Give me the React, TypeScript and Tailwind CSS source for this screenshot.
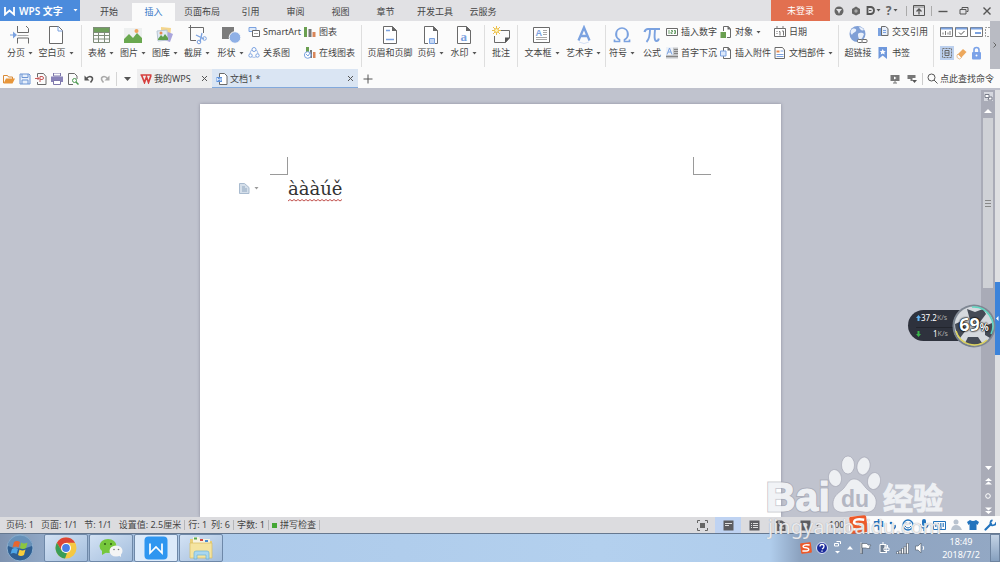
import type { ReactNode } from 'react'
import clsx from 'clsx'

type IconProps = { w?: number; h?: number; className?: string; children: ReactNode }

const Icon = ({ w = 20, h = 20, className, children }: IconProps) => (
    <svg width={w} height={h} viewBox={`0 0 ${w} ${h}`} fill="none" className={clsx('shrink-0', className)} aria-hidden="true">
        {children}
    </svg>
)

const Caret = ({ className = 'text-[#555]' }: { className?: string }) => (
    <Icon w={5} h={3} className={className}><path d="M0.5 0h4L2.5 2.5z" fill="currentColor" /></Icon>
)

const Sep = ({ className }: { className?: string }) => <div className={clsx('w-px shrink-0', className)} />

const G = '#6a6a6a'
const B = '#7ba2e0'

/* ---------- ribbon icons ---------- */

const PageBreak = () => (
    <Icon>
        <path d="M7.500 1v6.500h11V3.500L16 1M7.500 18.500v-5.500h11v5.500" stroke={G} />
        <path d="M7.500 10.500h11" stroke="#aaa" />
        <path d="M0 10h3" stroke={B} />
        <path d="M3 6.500v7l4-3.500z" fill={B} />
    </Icon>
)
const BlankPage = () => (
    <Icon>
        <path d="M3.500 1.500h9l4 4v13h-13z" stroke={G} fill="#fff" />
        <path d="M12 1.500v4.500h4.500" stroke={B} />
    </Icon>
)
const TableIcon = () => (
    <Icon>
        <path d="M2 2h17v5H2z" fill="#6f9f5c" />
        <path d="M2.500 2.500h16v15h-16zM2.500 7.500h16M2.500 10.500h16M2.500 14h16M7.500 7v10.500M13.500 7v10.500" stroke="#7f8c7a" />
    </Icon>
)
const PictureIcon = () => (
    <Icon>
        <path d="M1 3h18v15H1z" fill="#eef0f0" />
        <path d="M1 14l5-5 4 4 4-5 5 5v5H1z" fill="#6aa84f" />
        <circle cx="13.500" cy="6" r="2" fill="#f0a35c" />
    </Icon>
)
const GalleryIcon = () => (
    <Icon>
        <path d="M6 2l10 1-1 10-9-1z" fill="#f4d58c" />
        <path d="M13 7l5 2-3 8-6-2z" fill="#a9a5dc" />
        <path d="M2 6l10-1 1 10-10 1z" fill="#dfeaf5" stroke="#b9c6d3" />
        <path d="M3 14l3-4 2 2 2-3 3 4v2H3z" fill="#5f9f4b" />
        <circle cx="6" cy="8" r="1.500" fill="#e58a4f" />
    </Icon>
)
const ScreenshotIcon = () => (
    <Icon>
        <path d="M16.500 8V2.500h-13v13H9" stroke={G} />
        <path d="M1.500 2.500h2M3.500 0v3" stroke={G} />
        <path d="M9 10l8 4M15 8l-2 9" stroke={B} strokeWidth="1.300" />
        <circle cx="12" cy="17" r="1.800" stroke={B} /><circle cx="17.500" cy="13.500" r="1.800" stroke={B} />
    </Icon>
)
const ShapesIcon = () => (
    <Icon>
        <path d="M1 2h12v12H1z" fill="#7c7c7c" />
        <circle cx="14" cy="12.500" r="5.800" fill="#8fb0e6" stroke="#fbfbfb" />
    </Icon>
)
const HeaderFooterIcon = () => (
    <Icon>
        <path d="M3.500 1.500h9l4 4v13h-13z" stroke={G} fill="#fff" />
        <path d="M12 1v5h5z" fill="#666" />
        <path d="M6 5.500h4M6 14.500h8" stroke={B} strokeWidth="1.500" />
    </Icon>
)
const PageNumIcon = () => (
    <Icon>
        <path d="M7 18.500H3.500v-17h9l4 4v13H14" stroke={G} fill="#fff" />
        <path d="M12 1v5h5z" fill="#666" />
        <path d="M8.500 13.500h5v5h-5z" stroke={B} fill="#c6d8f3" />
    </Icon>
)
const WatermarkIcon = () => (
    <Icon>
        <path d="M3.500 1.500h9l4 4v13h-13z" stroke={G} fill="#fff" />
        <path d="M12 1v5h5z" fill="#666" />
        <text x="6.500" y="15.500" fontSize="13" fontWeight="700" fill={B} fontFamily="Liberation Serif">a</text>
    </Icon>
)
const CommentIcon = () => (
    <Icon>
        <path d="M9 5.500h9.500V13l-4 4.500h-11V11" stroke={G} />
        <path d="M19 12.500h-5V18z" fill="#555" />
        <path d="M5.500 1v9M1 5.500h9M2 2l7 7M9 2L2 9" stroke="#ecc04b" />
        <circle cx="5.500" cy="5.500" r="2" fill="#fff3b8" stroke="#ecc04b" />
    </Icon>
)
const TextBoxIcon = () => (
    <Icon>
        <path d="M1.500 2.500h16v15h-16z" stroke={G} fill="#fff" />
        <text x="3.500" y="10.500" fontSize="9" fontWeight="700" fill={B} fontFamily="Liberation Sans">A</text>
        <path d="M11 5.500h4M11 7.500h4M11 9.500h4M4 12.500h11M4 14.500h11" stroke="#a8a8a8" />
    </Icon>
)
const WordArtIcon = () => (
    <Icon>
        <path d="M4.500 15.500L10 2.500l5.500 13M6.500 11h7" stroke={B} strokeWidth="2.300" />
        <path d="M5 17q5 3 10 0" stroke="#d5e1f5" />
    </Icon>
)
const OmegaIcon = () => (
    <Icon>
        <path d="M2.500 14.500v2h5v-1.700C5 13.300 4 11.300 4 9a6 6 0 0 1 12 0c0 2.300-1 4.300-3.500 5.800v1.700h5v-2" stroke={B} strokeWidth="1.700" />
        <path d="M4.500 6.500v5M15.500 6.500v5" stroke={B} strokeWidth="1.500" />
    </Icon>
)
const PiIcon = () => (
    <Icon>
        <path d="M2.500 7c.8-2.500 2-3 3.500-3h12" stroke={B} strokeWidth="2.200" />
        <path d="M8 4.500c0 5-.5 9.500-3.500 12.500M13 4.500c-.5 6-1 11.500 1.500 11.500 1.300 0 2-1 2.300-2.500" stroke={B} strokeWidth="1.900" />
    </Icon>
)
const LinkIcon = () => (
    <Icon>
        <circle cx="9.500" cy="9" r="8" fill="#7f9fd6" />
        <path d="M4 4c3-1 5 0 4 2s-3 1-4 4c-2-2-2-4 0-6zM10 9c2-2 5-1 6 0-1 3-2 5-4 6-2-2-2-4-2-6zM11 2c2 0 4 1 5 3-2 1-4 0-5-3z" fill="#e9f0fb" />
        <rect x="9.500" y="14.500" width="5" height="3" rx="1" fill="#fff" stroke={G} /><rect x="14" y="14.500" width="5" height="3" rx="1" fill="#fff" stroke={G} />
    </Icon>
)
const SmartArtIcon = () => (
    <Icon w={12} h={12}>
        <path d="M1 1.500h7v4H1z" fill="#dfeaf8" stroke={B} />
        <path d="M4.500 4.500h7v6h-7z" fill="#fff" stroke={G} /><path d="M6 7.500h4" stroke="#aaa" />
    </Icon>
)
const RelationIcon = () => (
    <Icon w={12} h={12}>
        <circle cx="6" cy="6.500" r="4" stroke="#a9c1ea" />
        <circle cx="6" cy="2.500" r="2" fill="#fff" stroke={B} /><circle cx="2.500" cy="8.500" r="1.700" fill="#fff" stroke={B} /><circle cx="9.500" cy="8.500" r="1.700" fill="#fff" stroke={B} />
    </Icon>
)
const ChartIcon = () => (
    <Icon w={12} h={12}>
        <path d="M0 1h3v10H0z" fill="#6a9f50" /><path d="M4.500 3h3v8h-3z" fill="#777" /><path d="M8.500 6h3v5h-3z" fill="#d9865a" />
    </Icon>
)
const OnlineChartIcon = () => (
    <Icon w={12} h={12}>
        <path d="M2 0h3v6H2z" fill="#6a9f50" /><path d="M6 3h2v8H6z" fill="#777" /><path d="M9 5h2.500v6H9z" fill="#d9865a" />
        <circle cx="3.700" cy="8" r="3.300" fill="#fff" stroke={B} /><path d="M2 7l2 2 2-3" stroke={B} />
    </Icon>
)
const NumberIcon = () => (
    <Icon w={12} h={12}>
        <path d="M.5 2.500h11v7H.5z" stroke={G} fill="#fff" /><path d="M3 4v4M5 4.500h1.500v1.500H5V7.500h1.500M8 4.500h1.500v3H8M8 6h1.500" stroke="#6a9f6a" />
    </Icon>
)
const DropCapIcon = () => (
    <Icon w={12} h={12}>
        <path d="M0 .5h12v11H0z" fill="#c3c5c8" /><path d="M8 2.500h4M8 4.500h4M8 6.500h4M0 9.500h12" stroke="#858585" />
        <path d="M0 0h7v8H0z" fill="#eef2f8" /><path d="M1 7.500L3.500 1 6 7.500M2 5h3" stroke={B} />
    </Icon>
)
const ObjectIcon = () => (
    <Icon w={12} h={12}><path d="M3.500 5V.5h5l2 2.500v8.500H7" stroke={G} fill="#fff" /><path d="M7.500 0v3.500H11z" fill="#666" /><path d="M.5 6H6v6H.5z" fill="#6a9f50" /></Icon>
)
const AttachIcon = () => (
    <Icon w={12} h={12}><path d="M3.500 4V.5h5l2 2.500v8.500h-7V9" stroke={G} fill="#fff" /><path d="M7.500 0v3.500H11z" fill="#666" /><path d="M.5 4H6v5H.5z" fill="#dce8fa" stroke={B} /></Icon>
)
const DateIcon = () => (
    <Icon w={12} h={12}><path d="M.5 2.500h11v8H.5z" stroke={G} fill="#fff" /><path d="M3 0v3M9 0v3M5 5.500h1v4M8 5h1.500v4.500M2.500 5.500h1M2.500 7.500h1" stroke="#777" /></Icon>
)
const PartsIcon = () => (
    <Icon w={12} h={12}><path d="M1 .5h7.500l2 2.500v8.500H1z" stroke={G} fill="#fff" /><path d="M2.500 4.500h3" stroke="#e58a4f" strokeWidth="2" /><path d="M6.500 4h3M2.500 7.500h7M2.500 9.500h7" stroke={B} /></Icon>
)
const CrossRefIcon = () => (
    <Icon w={12} h={12}><path d="M1 2h5v8H1z" fill="#7ba2e0" /><path d="M4.500.5h4l2.500 2v7H4.500z" stroke={G} fill="#e8effa" /><path d="M6 4.500h3M6 6.500h3" stroke={B} /></Icon>
)
const BookmarkIcon = () => (
    <Icon w={12} h={12}><path d="M1.500 0h8.500v12L5.700 8.500 1.500 12z" fill="#6f98dc" /><path d="M5.700 2l1 2 2 .2-1.500 1.300.5 2-2-1-2 1 .5-2L2.700 4.200l2-.2z" fill="#fff" /></Icon>
)

/* ---------- ribbon building blocks ---------- */

type BigProps = { label: string; icon: ReactNode; width: string; arrow?: boolean }

const BigButton = ({ label, icon, width, arrow }: BigProps) => (
    <button className={clsx('flex h-full shrink-0 flex-col items-center pt-1', width)}>
        {icon}
        <span className="flex h-4 items-center gap-[3px] whitespace-nowrap">{label}{arrow && <Caret />}</span>
    </button>
)

const SmallButton = ({ label, icon, arrow }: { label: string; icon: ReactNode; arrow?: boolean }) => (
    <button className="flex h-3 items-center gap-[3px] whitespace-nowrap">{icon}{label}{arrow && <Caret />}</button>
)

const Column = ({ width, children }: { width: string; children: ReactNode }) => (
    <div className={clsx('flex shrink-0 flex-col gap-[9px] pt-[5px]', width)}>{children}</div>
)

const RibbonSep = ({ className }: { className?: string }) => <Sep className={clsx('mt-1 h-[42px] bg-[#dedede]', className)} />

const menus = [
    ['开始', 'w-[46px]'], ['插入', 'w-[43px]'], ['页面布局', 'w-[54px]'], ['引用', 'w-[43px]'], ['审阅', 'w-[47px]'],
    ['视图', 'w-[43px]'], ['章节', 'w-[47px]'], ['开发工具', 'w-[52px]'], ['云服务', 'w-[44px]'],
]

const TitleBar = () => (
    <header className="flex h-[21px] shrink-0 items-stretch bg-[#e1e1e4] text-[#444]">
        <button className="flex w-20 shrink-0 items-center bg-[#4b8bdc] pl-1 text-[10px] font-semibold text-white">
            <Icon w={12} h={10}><path d="M1 1v7.500l4.500-4 4.500 4V1" stroke="#fff" strokeWidth="1.800" /></Icon>
            <span className="ml-[3px] whitespace-nowrap">WPS 文字</span>
            <Caret className="mr-[2px] ml-auto text-white" />
        </button>
        <nav className="ml-[6px] flex items-end">
            {menus.map(([name, width]) => (
                <button key={name} className={clsx('h-[18px] shrink-0', width, name === '插入' && 'bg-[#fbfbfb] text-[#3c7cc9]')}>{name}</button>
            ))}
        </nav>
        <div className="ml-auto flex items-center">
            <button className="h-full w-[59px] bg-[#e27050] text-white">未登录</button>
            <button className="flex w-[18px] justify-center" aria-label="皮肤">
                <Icon w={10} h={10}><circle cx="5" cy="5" r="4.500" fill="#666" /><path d="M2 3h6L6 5.500 5 8 4 5.500z" fill="#e1e1e4" /></Icon>
            </button>
            <button className="flex w-4 justify-center" aria-label="设置">
                <Icon w={10} h={10}><path d="M5 .5L9 3v4.500L5 9.500 1 7.500V3z" fill="#666" /><circle cx="5" cy="5" r="1.700" fill="#aaa" /></Icon>
            </button>
            <button className="flex w-[18px] items-center justify-center gap-px" aria-label="文档">
                <Icon w={9} h={9}><path d="M1.500 1h3.500q3 .5 3 3.500T5 8H1.500z" stroke="#555" strokeWidth="1.800" /><path d="M3 4.500h2.500" stroke="#555" /></Icon><Caret />
            </button>
            <button className="flex w-5 items-center justify-center gap-[2px] text-[12px] font-bold text-[#666]">?<Caret /></button>
            <Sep className="ml-1 h-[10px] bg-[#aaa]" />
            <button className="flex w-6 justify-center" aria-label="折叠功能区">
                <Icon w={12} h={11}><path d="M.5.5h11v10H.5z" stroke="#555" /><path d="M1 2h10" stroke="#888" /><path d="M6 9.500v-5M3.500 6.500L6 4l2.500 2.500" stroke="#555" strokeWidth="1.300" /></Icon>
            </button>
            <Sep className="h-[10px] bg-[#aaa]" />
            <button className="flex w-[22px] justify-center" aria-label="最小化"><Icon w={10} h={10}><path d="M.5 5.500h9" stroke="#555" strokeWidth="1.400" /></Icon></button>
            <button className="flex w-5 justify-center" aria-label="还原"><Icon w={10} h={10}><path d="M3 3V1.500h6v4H7.500M1 3.500h6v4.500H1z" stroke="#555" /></Icon></button>
            <button className="flex w-[26px] justify-center" aria-label="关闭"><Icon w={10} h={10}><path d="M1.500 1.500l7 7M8.500 1.500l-7 7" stroke="#555" strokeWidth="1.400" /></Icon></button>
        </div>
    </header>
)

const Ribbon = () => (
    <div className="flex h-12 shrink-0 items-stretch overflow-hidden bg-[#fbfbfb]">
        <BigButton label="分页" icon={<PageBreak />} width="w-10" arrow />
        <BigButton label="空白页" icon={<BlankPage />} width="w-8" arrow />
        <RibbonSep className="mr-[3px] ml-[9px]" />
        <BigButton label="表格" icon={<TableIcon />} width="w-8" arrow />
        <BigButton label="图片" icon={<PictureIcon />} width="w-8" arrow />
        <BigButton label="图库" icon={<GalleryIcon />} width="w-8" arrow />
        <BigButton label="截屏" icon={<ScreenshotIcon />} width="w-8" arrow />
        <BigButton label="形状" icon={<ShapesIcon />} width="w-[35px]" arrow />
        <Column width="w-14">
            <SmallButton label="SmartArt" icon={<SmartArtIcon />} />
            <SmallButton label="关系图" icon={<RelationIcon />} />
        </Column>
        <Column width="w-[57px]">
            <SmallButton label="图表" icon={<ChartIcon />} />
            <SmallButton label="在线图表" icon={<OnlineChartIcon />} />
        </Column>
        <RibbonSep className="mr-1" />
        <BigButton label="页眉和页脚" icon={<HeaderFooterIcon />} width="w-12" />
        <BigButton label="页码" icon={<PageNumIcon />} width="w-[33px]" arrow />
        <BigButton label="水印" icon={<WatermarkIcon />} width="w-[33px]" arrow />
        <RibbonSep className="mr-1 ml-1" />
        <BigButton label="批注" icon={<CommentIcon />} width="w-6" />
        <RibbonSep className="mr-1 ml-1" />
        <BigButton label="文本框" icon={<TextBoxIcon />} width="w-10" arrow />
        <BigButton label="艺术字" icon={<WordArtIcon />} width="w-[43px]" arrow />
        <RibbonSep />
        <BigButton label="符号" icon={<OmegaIcon />} width="w-8" arrow />
        <BigButton label="公式" icon={<PiIcon />} width="w-[28px]" />
        <Column width="w-[54px]">
            <SmallButton label="插入数字" icon={<NumberIcon />} />
            <SmallButton label="首字下沉" icon={<DropCapIcon />} />
        </Column>
        <Column width="w-[54px]">
            <SmallButton label="对象" icon={<ObjectIcon />} arrow />
            <SmallButton label="插入附件" icon={<AttachIcon />} />
        </Column>
        <Column width="w-16">
            <SmallButton label="日期" icon={<DateIcon />} />
            <SmallButton label="文档部件" icon={<PartsIcon />} arrow />
        </Column>
        <RibbonSep />
        <BigButton label="超链接" icon={<LinkIcon />} width="w-[38px]" />
        <Column width="w-14">
            <SmallButton label="交叉引用" icon={<CrossRefIcon />} />
            <SmallButton label="书签" icon={<BookmarkIcon />} />
        </Column>
        <RibbonSep className="mr-[6px]" />
        <div className="grid w-[50px] shrink-0 grid-cols-[15px_15px_15px_5px] content-start gap-y-[7px] overflow-hidden pt-1">
            <button aria-label="文本域"><Icon w={13} h={14}><path d="M.5 2.500h12v9H.5z" fill="#fff" stroke="#777" /><path d="M1 3.500h11" stroke={B} strokeWidth="2" /><path d="M3 7.500v2M5.500 6v4M8 7.500v2M10 6v4" stroke="#777" /></Icon></button>
            <button aria-label="复选框"><Icon w={13} h={14}><path d="M.5 2.500h12v9H.5z" fill="#fff" stroke="#777" /><path d="M1 3.500h11" stroke={B} strokeWidth="2" /><path d="M4 7.500l2 2 3.500-3.500" stroke="#555" /></Icon></button>
            <button aria-label="下拉域"><Icon w={13} h={14}><path d="M.5 2.500h12v9H.5z" fill="#fff" stroke="#777" /><path d="M1 3.500h11" stroke={B} strokeWidth="2" /><path d="M5 8h6" stroke={B} strokeWidth="2" /></Icon></button>
            <button aria-label="更多域"><Icon w={5} h={14}><path d="M5 2.500H.5v9H5" stroke="#999" strokeDasharray="2 1" /></Icon></button>
            <button aria-label="底纹"><Icon w={14} h={14}><path d="M0 0h14v14H0z" fill="#bcd0ee" /><path d="M2.500 2.500h9v9h-9z" stroke="#777" strokeDasharray="2 1" /><path d="M5 4.500h4v5H5zM5 7h4" stroke="#666" /></Icon></button>
            <button aria-label="清除"><Icon w={13} h={14}><path d="M2 9l6-6 3.500 3L6 12q-3 1-4-3z" fill="#eda85c" /><path d="M3 8l3.500 3.500L4.500 13Q1 12 2 9z" fill="#fff" stroke="#e0a569" strokeWidth=".7" /></Icon></button>
            <button aria-label="保护"><Icon w={13} h={14}><rect x="2" y="6" width="9" height="7.500" rx="1" fill="#7ba2e8" /><path d="M4 6V4a2.500 2.500 0 0 1 5 0v2" stroke="#7ba2e8" strokeWidth="1.600" /><circle cx="6.500" cy="9.500" r="1" fill="#fff" /></Icon></button>
        </div>
        <button className="ml-auto flex w-[10px] shrink-0 items-center justify-center bg-[#b9bbc3]" aria-label="向右滚动">
            <Icon w={4} h={6}><path d="M.5.5L3 3 .5 5.500" stroke="#666" /></Icon>
        </button>
    </div>
)

const Close = () => <Icon w={7} h={7}><path d="M1 1l5 5M6 1L1 6" stroke="#555" /></Icon>

const TabBar = () => (
    <div className="flex h-[21px] shrink-0 items-center border-b-2 border-[#bfc1cc] bg-[#fbfbfb]">
        <div className="flex w-[113px] shrink-0 items-center gap-1 pl-[3px]">
            <button aria-label="打开"><Icon w={12} h={12}><path d="M.5 10V2.500h4l1 1.500h4v2" stroke="#d98a36" /><path d="M.5 10.500L3 5.500h9L9.500 10.500z" fill="#e8963a" /></Icon></button>
            <button aria-label="保存"><Icon w={12} h={12}><path d="M1 1h9l1 1v9H1z" stroke="#6d95d4" fill="#e7effb" /><path d="M3 1v3.500h6V1M3 11V7h6v4" stroke="#6d95d4" /></Icon></button>
            <button aria-label="输出PDF"><Icon w={12} h={12}><path d="M2.500 4V.5h6l2.500 3v8H2.500V9" stroke={G} /><path d="M5 9V3.500h2q1.500 0 1.500 1.500T7 6.500H5M0 5.500h4M2.500 4L4 5.500 2.500 7" stroke="#c75a5a" /></Icon></button>
            <button aria-label="打印"><Icon w={12} h={12}><path d="M2.500 0h7v3h-7z" stroke="#7d77ab" /><path d="M0 3.500h12V9H0z" fill="#8882b8" /><path d="M2.500 7.500h7v4h-7z" fill="#fff" stroke="#7d77ab" /></Icon></button>
            <button aria-label="打印预览"><Icon w={12} h={12}><path d="M6 11.500H1.500V.5h6L10 3v3" stroke={G} /><circle cx="7.500" cy="7.500" r="2" stroke="#4d9a50" /><path d="M9 9l2.500 2.500" stroke="#4d9a50" strokeWidth="1.500" /></Icon></button>
            <button aria-label="撤销"><Icon w={12} h={12}><path d="M3 6Q6 2.500 8.500 4T7.500 9.500" stroke="#555" strokeWidth="1.600" /><path d="M1.500 2.500v5h5z" fill="#555" /></Icon></button>
            <button aria-label="恢复"><Icon w={12} h={12}><path d="M9 6Q6 2.500 3.500 4T4.500 9.500" stroke="#aaa" strokeWidth="1.600" /><path d="M10.500 2.500v5h-5z" fill="#aaa" /></Icon></button>
        </div>
        <Sep className="ml-[3px] h-[14px] bg-[#d5d5d5]" />
        <button className="flex w-5 justify-center" aria-label="自定义"><Icon w={7} h={4}><path d="M0 0h7L3.500 4z" fill="#555" /></Icon></button>
        <div className="flex h-full w-[75px] shrink-0 items-center bg-[#eeeeef] pl-[3px]">
            <Icon w={12} h={10}><path d="M.5 1h11M1.500 1l3 7.500L6.500 3l2 5.500 2.500-7" stroke="#d6403f" strokeWidth="1.700" /></Icon>
            <button className="ml-[2px] whitespace-nowrap">我的WPS</button>
            <button className="mr-1 ml-auto" aria-label="关闭我的WPS"><Close /></button>
        </div>
        <div className="flex h-full w-[146px] shrink-0 items-center bg-[#dae5f3] pl-1 shadow-[inset_0_-1px_0_#82a9dc]">
            <Icon w={12} h={12}><path d="M3.500 4V.5h5L11 3v8.500H3.500V9" stroke={G} fill="#fff" /><path d="M.5 4H6v5H.5z" fill="#5f93dd" /><path d="M1.500 5v2.500L3.200 6 5 7.500V5" stroke="#fff" strokeWidth=".8" /></Icon>
            <button className="ml-[2px] whitespace-nowrap">文档1 *</button>
            <button className="mr-1 ml-auto" aria-label="关闭文档1"><Close /></button>
        </div>
        <button className="ml-[5px]" aria-label="新建"><Icon w={10} h={10}><path d="M5 .5v9M.5 5h9" stroke="#555" /></Icon></button>
        <div className="ml-auto flex items-center pr-[6px]">
            <button aria-label="放映"><Icon w={10} h={10}><path d="M.5 1h9v6h-9z" fill="#777" /><path d="M4 2.500v3L6.500 4z" fill="#fff" /><path d="M3 9h4M5 7v2" stroke="#777" /></Icon></button>
            <button className="ml-[7px]" aria-label="窗口"><Icon w={10} h={10}><path d="M.5 1h8v3h-3v3h-2v-2h-3z" fill="#777" /><path d="M5 6h5L7.500 9z" fill="#555" /></Icon></button>
            <Sep className="mr-1 ml-[5px] h-3 bg-[#ccc]" />
            <button className="flex items-center gap-[2px] whitespace-nowrap">
                <Icon w={11} h={11}><circle cx="4.500" cy="4.500" r="3.500" stroke="#555" /><path d="M7 7l3.500 3.500" stroke="#555" /></Icon>
                点此查找命令
            </button>
        </div>
    </div>
)

const Page = () => (
    <article className="mx-auto mt-[14px] flex w-[581px] flex-col bg-white pt-[53px] shadow-[0_0_3px_rgba(90,90,110,0.5)]">
        <div className="flex justify-between px-[70px]">
            <div className="size-[18px] border-r border-b border-[#9a9a9a]" />
            <div className="size-[18px] border-b border-l border-[#9a9a9a]" />
        </div>
        <div className="flex pt-[3px] pl-[39px]">
            <button className="mt-[2px] flex h-4 w-[49px] items-center gap-1" aria-label="粘贴选项">
                <Icon w={11} h={11}><path d="M.5.500h5l4.500 4v6H.5z" fill="#d5dfea" stroke="#a9bbcf" /><path d="M3 4h3M3 6h5M3 8h5" stroke="#8fa6bf" /></Icon>
                <Caret className="text-[#999]" />
            </button>
            <div className="flex flex-col">
                <p className="font-['DejaVu_Serif',serif] text-[18px] leading-[22px] text-[#333]">àààúě</p>
                <Icon w={55} h={3} className="-mt-px"><path d="M0 2l2-1.500 2 1.500 2-1.500 2 1.500 2-1.500 2 1.500 2-1.500 2 1.500 2-1.500 2 1.500 2-1.500 2 1.500 2-1.500 2 1.500 2-1.500 2 1.500 2-1.500 2 1.500 2-1.500 2 1.500 2-1.500 2 1.500 2-1.500 2 1.500 2-1.500 2 1.500 2-1.500" stroke="#c0504d" /></Icon>
            </div>
        </div>
    </article>
)

const NetMeter = () => (
    <div className="absolute top-[213px] right-1 flex h-[45px] items-center text-[8px] text-white">
        <div className="-mr-[12px] flex h-[31px] w-14 flex-col justify-around rounded-l-full bg-[#2e323d] pl-2">
            <span className="flex items-center whitespace-nowrap"><Icon w={5} h={6}><path d="M2.500 0L5 3H3.500v3h-2V3H0z" fill="#62b3f2" /></Icon>37.2<i className="text-[7px] text-[#aaa] not-italic">K/s</i></span>
            <span className="flex items-center border-t border-[#22252d] whitespace-nowrap"><Icon w={5} h={6}><path d="M2.500 6L5 3H3.500V0h-2v3H0z" fill="#39b54a" /></Icon><span className="ml-3">1</span><i className="text-[7px] text-[#aaa] not-italic">K/s</i></span>
        </div>
        <div className="relative">
            <Icon w={44} h={44}>
                <circle cx="22" cy="22" r="21.500" fill="#7f8793" />
                <circle cx="22" cy="22" r="19.500" fill="#d5d9de" />
                <path d="M15 5l8 3 8-3 3 5-6 8-10-2zM3 20l7-3 4 9-6 8q-5-6-5-14zM40 19l-7 3 0 9 5 3q5-7 2-15zM16 33l10 0 4 6q-8 4-17 0z" fill="#454b56" />
                <path d="M3.500 13A20.500 20.500 0 0 0 22 42.500" stroke="#74808c" />
                <path d="M20 3a19 19 0 0 1 19 27" stroke="#5fd6c0" strokeWidth="1.500" />
                <path d="M4 27a19 19 0 0 0 31 9" stroke="#dcd25c" strokeWidth="1.500" />
            </Icon>
            <span className="absolute inset-0 flex items-center justify-center pb-1 text-[18px] font-bold [text-shadow:0_0_2px_#000,0_0_2px_#000,0_0_1px_#000]">69<span className="mt-[6px] text-[10px]">%</span></span>
        </div>
    </div>
)

const Workspace = () => (
    <main className="relative flex min-h-0 flex-1 bg-[#c0c3ce]">
        <div className="flex flex-1 overflow-hidden"><Page /></div>
        <div className="flex w-[14px] shrink-0 flex-col items-center bg-[#a9abb7] pt-[2px]">
            <button aria-label="标尺"><Icon w={9} h={9}><path d="M0 0h9v9H0z" fill="#d5d7de" /><path d="M1 2.500h4v3H1zM5 5h3v3H4z" fill="#fff" stroke="#777b88" /></Icon></button>
            <button className="mt-2" aria-label="向上滚动"><Icon w={8} h={4}><path d="M4 0l4 4H0z" fill="#fff" /></Icon></button>
            <button className="mt-[5px] flex h-[170px] w-[10px] items-center justify-center bg-[#cfd1d6]" aria-label="滚动条">
                <Icon w={6} h={7}><path d="M0 .5h6M0 3.500h6M0 6.500h6" stroke="#888" /></Icon>
            </button>
            <div className="mt-auto flex flex-col items-center gap-2 pb-[3px]">
                <button aria-label="向下滚动"><Icon w={7} h={4}><path d="M0 0h7L3.500 4z" fill="#fff" /></Icon></button>
                <button aria-label="上一页"><Icon w={7} h={7}><path d="M3.500 0L7 3H0zM3.500 3.500L7 6.500H0z" fill="#fff" /></Icon></button>
                <button aria-label="选择浏览对象"><Icon w={6} h={6}><circle cx="3" cy="3" r="2.300" stroke="#fff" /></Icon></button>
                <button aria-label="下一页"><Icon w={7} h={7}><path d="M3.500 3.500L7 .5H0zM3.500 7L7 4H0z" fill="#fff" /></Icon></button>
            </div>
        </div>
        <div className="flex w-[5px] shrink-0 flex-col bg-[#dedfe2] pt-48">
            <button className="flex h-[73px] w-full items-center bg-[#3c83da]" aria-label="展开任务窗格"><Icon w={4} h={5}><path d="M3.500 0v5L1 2.500z" fill="#fff" /></Icon></button>
        </div>
        <NetMeter />
    </main>
)

const SogouLogo = ({ size }: { size: string }) => (
    <svg viewBox="0 0 20 20" className={clsx('shrink-0', size)} fill="none" aria-hidden="true">
        <rect x="1" y="1" width="18" height="18" rx="2" fill="#ee5a2a" transform="rotate(-7 10 10)" />
        <path d="M16 5Q7 3.500 5.500 6.500T10 9.500q5 1 4.500 3.500T4 15" stroke="#fff" strokeWidth="2.500" />
    </svg>
)

const ImeBar = () => (
    <div className="absolute right-0 bottom-0 flex h-[17px] w-[151px] items-center justify-between rounded-l bg-white/90 pr-1 text-[#2273bd]">
        <SogouLogo size="size-[19px]" />
        <button className="text-[11px] font-bold">中</button>
        <Icon w={8} h={10}><circle cx="2" cy="3" r="1.300" fill="currentColor" /><path d="M6 5q1 2-1 4" stroke="currentColor" strokeWidth="1.600" /></Icon>
        <Icon w={12} h={12}><circle cx="6" cy="6" r="5" stroke="currentColor" strokeWidth="1.300" /><path d="M4 3.500v1.500M8 3.500v1.500M3 7q3 4 6 0" stroke="currentColor" /></Icon>
        <Icon w={10} h={12}><rect x="3" y="0" width="4" height="7" rx="2" fill="currentColor" /><path d="M1 5q0 4 4 4t4-4M5 9v3" stroke="currentColor" strokeWidth="1.300" /></Icon>
        <Icon w={13} h={10}><path d="M.5 1.500h12v8H.5z" stroke="currentColor" /><path d="M2 4h9M2 6h9" stroke="currentColor" strokeDasharray="1.500 1" strokeWidth="1.300" /><path d="M4 8h5" stroke="currentColor" /></Icon>
        <Icon w={11} h={12}><circle cx="5" cy="3" r="2.500" fill="#b9c3cf" /><path d="M0 11q1-5 5-5t6 5z" fill="#b9c3cf" /></Icon>
        <Icon w={12} h={11}><path d="M0 3l3-2q3 2 6 0l3 2-1.500 3L9.500 5v6h-7V5l-1 1z" fill="currentColor" /></Icon>
        <Icon w={12} h={12}><path d="M1.500 10.500L7 5" stroke="currentColor" strokeWidth="2.200" strokeLinecap="round" /><path d="M8.500 1.200Q6 2 6.500 4.500T10 6t1.300-2.500" stroke="currentColor" strokeWidth="1.800" /></Icon>
    </div>
)

const StatusSep = () => <Sep className="mx-[3px] h-[10px] bg-[#b5b5b8]" />

const StatusBar = () => (
    <footer className="relative flex h-4 shrink-0 items-center bg-[#dcdcdf] pl-[6px] whitespace-nowrap text-[#444]">
        <div className="flex shrink-0 items-center gap-[7px]">
            <span>页码: 1</span><span>页面: 1/1</span><span>节: 1/1</span><span>设置值: 2.5厘米</span>
        </div>
        <StatusSep />
        <div className="flex gap-1"><span>行: 1</span><span>列: 6</span></div>
        <StatusSep />
        <span>字数: 1</span>
        <StatusSep />
        <span className="mr-[3px] size-[5px] bg-[#45a735]" />
        <button>拼写检查</button>
        <StatusSep />
        <div className="ml-auto flex items-center pr-[151px]">
            <button className="flex w-[26px] justify-center" aria-label="全屏"><Icon w={11} h={11}><path d="M3 3h5v5H3z" fill="#666" /><path d="M.5 3V.5H3M8 .5h2.500V3M10.500 8v2.500H8M3 10.500H.5V8" stroke="#666" /></Icon></button>
            <button className="flex h-4 w-[26px] items-center justify-center bg-[#bfd3f2]" aria-label="页面视图"><Icon w={11} h={11}><path d="M.5.500h10v10H.5z" fill="#5c5c60" /><path d="M2 3.500h7M2 5.500h4" stroke="#ddd" /></Icon></button>
            <button className="flex w-[26px] justify-center" aria-label="大纲"><Icon w={11} h={11}><path d="M.5.500h10v10H.5z" fill="#5c5c60" /><path d="M2 3.500h1M4 3.500h5M2 5.500h1M4 5.500h5M2 7.500h1M4 7.500h5" stroke="#ddd" /></Icon></button>
            <button className="flex w-[26px] justify-center" aria-label="Web版式"><Icon w={11} h={11}><path d="M1 .500h6L10.500 3v8H1z" fill="#5c5c60" /><path d="M4 1v3h3M4 8h5M5 6v5" stroke="#ddd" /></Icon></button>
            <button className="flex w-[34px] items-center justify-center gap-1" aria-label="显示比例"><Icon w={11} h={11}><path d="M.5.500h10v10H.5z" fill="#5c5c60" /><circle cx="5.500" cy="5" r="2" fill="#ddd" /></Icon><Caret /></button>
            <button className="ml-[2px] w-[20px] text-left">100</button>
        </div>
        <ImeBar />
    </footer>
)

const TaskButton = ({ label, active, children }: { label: string; active?: boolean; children: ReactNode }) => (
    <button
        aria-label={label}
        className={clsx('flex h-[28px] w-11 items-center justify-center rounded-[2px] border border-[#6e88a8]', active ? 'bg-[#dceafa]' : 'bg-linear-to-br from-[#d3e2f4] to-[#a4bedd]')}
    >
        {children}
    </button>
)

const Taskbar = () => (
    <div className="flex h-[29px] shrink-0 items-center border-t border-[#66788f] bg-[linear-gradient(to_right,#7f93b0_0%,#8fa6c4_4%,#adcaea_20%,#b3d0ee_60%,#b0cdec_77%,#8ca2bf_80%,#93a8c4_100%)]">
        <button className="flex w-11 shrink-0 justify-center pr-1" aria-label="开始菜单">
            <Icon w={28} h={28}>
                <circle cx="14" cy="14" r="13" fill="#2f5f92" stroke="#8fb0cf" />
                <path d="M2 12a12 12 0 0 1 24 0q-12 5-24 0z" fill="#7fa6cb" opacity=".7" />
                <path d="M8 8q3-2 6 0l-1.500 5.500q-3-2-6 0z" fill="#e8662e" /><path d="M15 8.500q3 2 6.500 0L20 14q-3 2-6 0z" fill="#8cc63e" />
                <path d="M6 15q3-2 6 0L10.500 20q-3-2-6 0z" fill="#4ea6e6" /><path d="M13.500 15.500q3 2 6 0L18 21q-3 2-6 0z" fill="#f8cd3c" />
            </Icon>
        </button>
        <div className="flex shrink-0 gap-px">
            <TaskButton label="Chrome">
                <Icon w={22} h={22}>
                    <circle cx="11" cy="11" r="10.500" fill="#f6c842" />
                    <path d="M1.900 5.800A10.500 10.500 0 0 1 20.100 5.800H11L6.500 13.600z" fill="#dc4437" />
                    <path d="M1.900 5.800L6.500 13.600 11 16.200l1 0-2 5.300A10.500 10.500 0 0 1 1.900 5.800z" fill="#3a9d58" />
                    <circle cx="11" cy="11" r="5" fill="#fff" /><circle cx="11" cy="11" r="3.900" fill="#4a7fe8" />
                </Icon>
            </TaskButton>
            <TaskButton label="微信">
                <Icon w={24} h={20}>
                    <ellipse cx="9" cy="8" rx="8.500" ry="7" fill="#76c73c" /><path d="M3 12l0 5 5-3z" fill="#76c73c" />
                    <circle cx="6" cy="6" r="1" fill="#2f5d16" /><circle cx="12" cy="6" r="1" fill="#2f5d16" />
                    <ellipse cx="17" cy="13" rx="6.500" ry="5.500" fill="#f5f5f5" /><path d="M19 17l3 2 0-4z" fill="#f5f5f5" />
                    <circle cx="15" cy="11.500" r=".8" fill="#777" /><circle cx="19.500" cy="11.500" r=".8" fill="#777" />
                </Icon>
            </TaskButton>
            <TaskButton label="WPS 文字" active>
                <Icon w={24} h={24}><rect x=".5" y=".5" width="23" height="23" rx="4" fill="#2f96f0" /><path d="M6 7.500v9.500l6-6 6 6V7.500" stroke="#fff" strokeWidth="1.700" /></Icon>
            </TaskButton>
            <TaskButton label="资源管理器">
                <Icon w={26} h={24}>
                    <path d="M2 3h7l1 2h14v17H2z" fill="#e9cf79" /><path d="M5 1h6l1 2h10v4H5z" fill="#f7f3df" />
                    <path d="M6 2.500h3" stroke="#55a64f" strokeWidth="2" /><path d="M12 4h3" stroke="#d6483f" strokeWidth="2" /><path d="M17 5h3" stroke="#4a8bd0" strokeWidth="2" />
                    <path d="M2 7h22v15H2z" fill="#f5e4a0" stroke="#d9bd62" strokeWidth=".7" />
                    <path d="M6 23v-6q0-2 2-2h11q2 0 2 2v6h-3v-4H9v4z" fill="#a9d7ef" stroke="#6fb1d5" strokeWidth=".7" />
                </Icon>
            </TaskButton>
        </div>
        <div className="ml-auto flex h-full items-center gap-[6px] text-white">
            <SogouLogo size="size-3" />
            <Icon w={12} h={12} className="-ml-[2px]"><circle cx="6" cy="6" r="5.500" fill="#1c2c9c" stroke="#dfe6f5" /><path d="M4 4.500q0-2 2-2t2 1.700T6 7M6 8.500v1.300" stroke="#fff" strokeWidth="1.300" /></Icon>
            <Icon w={7} h={14}><path d="M2.500.5h4v2.500M.5 2.500h4v2.500h-4z" stroke="#fff" /><path d="M1 10h5l-2.500 2.500z" fill="#fff" /></Icon>
            <button aria-label="显示隐藏的图标"><Icon w={6} h={4}><path d="M3 0l3 3.500H0z" fill="#fff" /></Icon></button>
            <Icon w={13} h={12}><path d="M2.500 1v11" stroke="#555f6c" strokeWidth="2.500" /><path d="M2 .5v11" stroke="#fff" /><path d="M3 1.500h5l1 1.500h3l-1.500 2 .5 1.500H8L7 6H3z" fill="#fff" stroke="#5c6775" strokeWidth=".7" /></Icon>
            <Icon w={12} h={12}><path d="M2 2.500h6v8H2z" fill="#6d7d91" stroke="#fff" /><path d="M4 1h2M7 3v3M9.500 3v3M6 6h5v2.500H6zM8.500 8v3" stroke="#fff" /></Icon>
            <Icon w={13} h={12}><path d="M1.500 12V9.500M4 12V8M6.500 12V6M9 12V4M11.500 12V1" stroke="#55606e" strokeWidth="2.400" /><path d="M1.500 11.500V10M4 11.500V8.500M6.500 11.500V6.500M9 11.500V4.500M11.500 11.500V1.500" stroke="#fff" strokeWidth="1.300" /></Icon>
            <Icon w={11} h={12}><path d="M.5 4h2.500l3-3v10L3 8H.5z" fill="#fff" stroke="#5c6775" strokeWidth=".7" /><path d="M8 4q1.500 2 0 4" stroke="#fff" /></Icon>
            <time className="mr-[2px] ml-2 flex w-[42px] flex-col items-center text-[9px] leading-[13px]"><span>18:49</span><span>2018/7/2</span></time>
            <button className="h-full w-[10px] border border-[#6e84a0] bg-linear-to-b from-[#c4d3e5] to-[#86a0bf]" aria-label="显示桌面" />
        </div>
    </div>
)

const Watermark = () => (
    <div className="pointer-events-none absolute right-[50px] bottom-[23px] flex w-[182px] flex-col">
        <svg width="182" height="70" viewBox="0 0 182 70" fill="#f1f3f6" stroke="#9a9dab" strokeOpacity=".55" strokeWidth="1" opacity=".95" fontWeight="700" className="overflow-visible">
            <text x="-2" y="58" fontSize="41" fontFamily="Liberation Sans, sans-serif" strokeWidth="3" paintOrder="stroke">Bai</text>
            <text x="-2" y="58" fontSize="41" fontFamily="Liberation Sans, sans-serif" stroke="#f1f3f6" strokeOpacity="1" aria-hidden="true">Bai</text>
            <ellipse cx="67" cy="25" rx="6.500" ry="8.500" transform="rotate(-10 67 25)" />
            <ellipse cx="80" cy="12" rx="6.500" ry="9" />
            <ellipse cx="95.500" cy="13" rx="6.500" ry="9" transform="rotate(12 95.500 13)" />
            <ellipse cx="106" cy="28" rx="6.500" ry="8.500" transform="rotate(10 106 28)" />
            <path d="M86 26c7 0 9 7 14 11 5 4 9 7 8 14s-7 9-12 8-14-1-19 0-12-1-12-8 4-10 9-14 6-11 12-11z" />
            <text x="73" y="54" fontSize="23" fontFamily="Liberation Sans, sans-serif" fill="#b4b7c3" stroke="none">du</text>
            <text x="115" y="56" fontSize="30" fontFamily="Noto Sans CJK SC, sans-serif" stroke="#f1f3f6" strokeOpacity="1">经验</text>
        </svg>
        <span className="-mt-2 text-[20px] leading-6 text-white/80 [text-shadow:0_0_1px_#8b8e99]">jingyan.baidu.com</span>
    </div>
)

const App = () => {
    return (
        <div className="relative flex h-screen flex-col overflow-hidden bg-[#c0c3ce] font-['Noto_Sans','Noto_Sans_CJK_SC',sans-serif] text-[9px] leading-3 text-[#444]">
            <TitleBar />
            <Ribbon />
            <TabBar />
            <Workspace />
            <StatusBar />
            <Taskbar />
            <Watermark />
        </div>
    )
}

export default App
